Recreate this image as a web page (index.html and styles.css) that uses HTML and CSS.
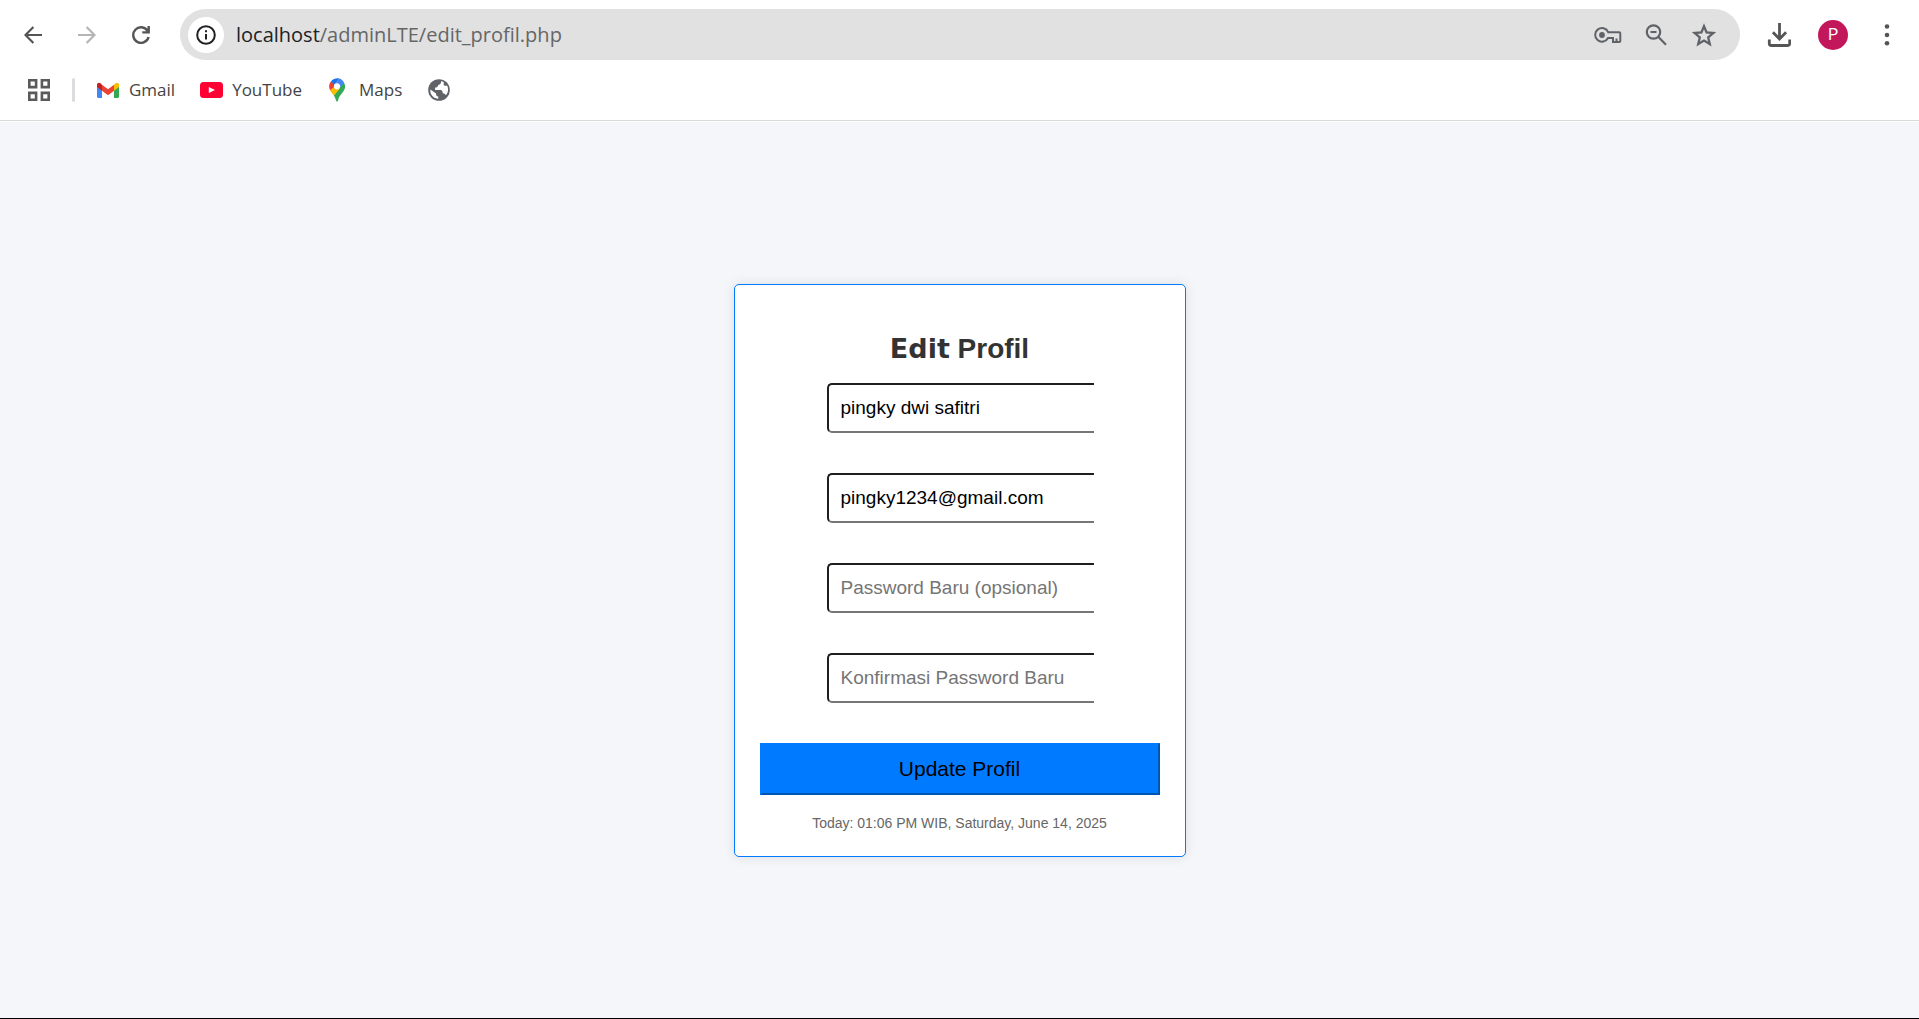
FILE: index.html
```html
<!DOCTYPE html>
<html lang="id">
<head>
<meta charset="utf-8">
<meta name="viewport" content="width=device-width, initial-scale=1">
<title>Edit Profil</title>
<link rel="stylesheet" href="styles.css">
</head>
<body>
<header class="browser">
  <div class="toolbar">
    <nav class="nav-buttons" aria-label="Navigation">
      <button class="icon-button" type="button" aria-label="Back">
        <svg width="18" height="18" viewBox="0 0 18 18" fill="none" stroke="#555" stroke-width="2.2"><path d="M18 9H1.8M9.4 1 1.5 9l7.9 8"/></svg>
      </button>
      <button class="icon-button" type="button" aria-label="Forward" disabled>
        <svg width="18" height="18" viewBox="0 0 18 18" fill="none" stroke="#b5b5b5" stroke-width="2.2"><path d="M0 9h16.2M8.6 1l7.9 8-7.9 8"/></svg>
      </button>
      <button class="icon-button" type="button" aria-label="Reload">
        <svg width="18" height="18" viewBox="0 0 18 18" fill="none" stroke="#555" stroke-width="2.4"><path d="M15.6 4.8A7.8 7.8 0 1 0 16.6 11M16.7 0v6.4h-6.4"/></svg>
      </button>
    </nav>
    <div class="address-bar">
      <button class="site-info" type="button" aria-label="Site information">
        <svg width="20" height="20" viewBox="0 0 20 20"><circle cx="10" cy="10" r="8.8" fill="none" stroke="#202124" stroke-width="2"/><path d="M9 9h2v5.5H9zM9 5.3h2v2H9z" fill="#202124"/></svg>
      </button>
      <span class="url"><span class="host">localhost</span>/adminLTE/edit_profil.php</span>
      <div class="address-actions">
        <button class="icon-button" type="button" aria-label="Passwords">
          <svg width="28" height="18" viewBox="0 0 28 18" fill="none" stroke="#5f6368" stroke-width="2"><path d="M14.2 6.2A6.8 6.8 0 1 0 14 12h5v4h6.2q1.1 0 1.1-1.100V7.300q0-1.100-1.100-1.100zM22.500 16v-3.500"/><circle cx="8" cy="9" r="2.900" fill="#5f6368" stroke="none"/></svg>
        </button>
        <button class="icon-button" type="button" aria-label="Zoom">
          <svg width="22" height="22" viewBox="0 0 22 22" fill="none" stroke="#5f6368" stroke-width="2.200"><circle cx="8.500" cy="8" r="6.700"/><path d="M13.200 12.800 21 20.700M5.500 8h6"/></svg>
        </button>
        <button class="icon-button" type="button" aria-label="Bookmark this tab">
          <svg width="24" height="24" viewBox="0 0 24 24" fill="none" stroke="#5f6368" stroke-width="2.300"><path d="M12 3.200 14.600 9.400l6.800.600-5.200 4.400 1.600 6.600L12 17.500 6.200 21l1.600-6.600L2.600 10l6.800-.6z"/></svg>
        </button>
      </div>
    </div>
    <div class="nav-buttons">
      <button class="icon-button" type="button" aria-label="Downloads">
        <svg width="24" height="24" viewBox="-1 0 24 24" fill="none" stroke="#555" stroke-width="2.800"><path d="M11.500 0v16M4.900 9.300l6.600 6.700 6.600-6.700M1.300 16.500v4q0 2 2 2h16.400q2 0 2-2v-4"/></svg>
      </button>
      <button class="icon-button" type="button" aria-label="Profile"><span class="avatar">P</span></button>
      <button class="icon-button" type="button" aria-label="Menu">
        <svg width="6" height="24" viewBox="0 0 6 24" fill="#555"><circle cx="3" cy="3.500" r="2.300"/><circle cx="3" cy="12" r="2.300"/><circle cx="3" cy="20.300" r="2.300"/></svg>
      </button>
    </div>
  </div>
  <nav class="bookmarks" aria-label="Bookmarks">
    <button class="apps" type="button" aria-label="Apps">
      <svg width="22" height="22" viewBox="0 0 22 22" fill="none" stroke="#5a5a5a" stroke-width="2.600"><path d="M1.300 1.300h6.800v6.800H1.300zM13.900 1.300h6.800v6.800h-6.800zM1.300 13.900h6.800v6.800H1.300zM13.900 13.900h6.800v6.800h-6.800z"/></svg>
    </button>
    <span class="divider"></span>
    <div class="bookmark-list">
      <a class="bookmark" href="#">
        <svg width="24" height="24" viewBox="1 0 24 24"><path d="M1 6v12.500Q1 20 2.500 20H6V9.500z" fill="#4285f4"/><path d="M23 6v12.500q0 1.500-1.500 1.500H18V9.500z" fill="#34a853"/><path d="M6 6.800 12 11.300l6-4.500v6L12 17.300 6 12.800z" fill="#ea4335"/><path d="M18 6.800 19.400 5.200C21 4 23 4.800 23 7v2L18 12.800z" fill="#fbbc04"/><path d="M6 6.800 4.600 5.200C3 4 1 4.800 1 7v2L6 12.800z" fill="#c5221f"/></svg>
        Gmail</a>
      <a class="bookmark" href="#">
        <svg width="24" height="24" viewBox="0 0 24 24"><rect y="4" width="23" height="16" rx="3.500" fill="#ff0033"/><path d="m8.800 9 6.200 3-6.200 3z" fill="#fff"/></svg>
        YouTube</a>
      <a class="bookmark" href="#">
        <svg width="24" height="24" viewBox="2 0 24 24"><path d="M18.700 4.300C22 9.500 18.800 13 16 16.500c-1.700 2-2.400 3.500-3 6-.3 1.300-1.700 1.300-2 0-.5-2-1-3.300-2.200-5z" fill="#34a853"/><path d="M5 12.300 9.500 7l5.300 3.800-6 6.700C7.300 15.600 5.800 14 5 12.300z" fill="#fbbc04"/><path d="M6 3.300 11 7.500l-6 4.800C3.500 9 4 6 6 3.300z" fill="#ea4335"/><path d="M14.300.4 9.500 6.900 6 3.300C8 .8 11 0 14.300.4z" fill="#1a73e8"/><path d="M14.300.4c2 .6 3.600 2 4.700 4.400l-5.500 6.400-4-4.300z" fill="#4285f4"/><circle cx="12" cy="8.300" r="3.100" fill="#fff"/></svg>
        Maps</a>
      <a class="bookmark" href="#" aria-label="Website">
        <svg width="24" height="24" viewBox="0 0 24 24"><circle cx="12" cy="12" r="10.800" fill="#5f6368"/><path d="M14 3.300c.3 2-.7 3.600-2.700 3.700-.6 2.200-1.700 2.700-3.200 2.600V12h5.400c1.800.1 2.200 1.300 2.200 3.200 1.700-.1 2.600.8 3 2.100 2.900-3.100 2.900-7.100 1.300-9.900-1.600.7-3.300.5-3.300-1.200V4c-.7-.4-1.500-.6-2.700-.7zM3.300 11.500c-.5 5.200 3.500 9.300 8 9.300v-2.400c-1.700 0-2.200-1.100-2.200-3z" fill="#fff"/></svg>
      </a>
    </div>
  </nav>
</header>
<main class="page">
  <form class="card" onsubmit="return false">
    <h2 class="title"><span class="title-heavy">Edit</span> Profil</h2>
    <div class="fields">
      <input class="field" type="text" name="nama" aria-label="Nama" value="pingky dwi safitri">
      <input class="field" type="email" name="email" aria-label="Email" value="pingky1234@gmail.com">
      <input class="field" type="password" name="password" aria-label="Password Baru" placeholder="Password Baru (opsional)">
      <input class="field" type="password" name="konfirmasi" aria-label="Konfirmasi Password Baru" placeholder="Konfirmasi Password Baru">
    </div>
    <button class="submit" type="submit">Update Profil</button>
    <p class="today">Today: 01:06 PM WIB, Saturday, June 14, 2025</p>
  </form>
</main>
</body>
</html>
```
FILE: styles.css
```css
* {
  box-sizing: border-box;
}

body {
  margin: 0;
  min-height: 100vh;
  display: flex;
  flex-direction: column;
  background: #f4f6fa;
  border-bottom: 1px solid #000;
  font-family: "Liberation Sans", Arial, sans-serif;
}

svg {
  display: block;
}

button {
  padding: 0;
  border: 0;
  background: none;
}

.browser {
  background: #fff;
  border-bottom: 1px solid #d9d9d9;
  font-family: "Open Sans", "Noto Sans", sans-serif;
}

.toolbar {
  display: flex;
  align-items: center;
  gap: 21px;
  padding: 9px 14px 0 15px;
}

.nav-buttons {
  display: flex;
  gap: 18px;
}

.icon-button {
  width: 36px;
  height: 36px;
  display: flex;
  align-items: center;
  justify-content: center;
}

.address-bar {
  flex: 1;
  display: flex;
  align-items: center;
  gap: 12px;
  height: 51px;
  padding: 0 18px 0 8px;
  border-radius: 26px;
  background: #e1e1e1;
}

.site-info {
  width: 36px;
  height: 36px;
  display: flex;
  align-items: center;
  justify-content: center;
  border-radius: 50%;
  background: #fff;
}

.url {
  flex: 1;
  font-size: 20px;
  line-height: 28px;
  color: #666;
}

.host {
  color: #202124;
}

.address-actions {
  display: flex;
  gap: 12px;
}

.avatar {
  width: 30px;
  height: 30px;
  border-radius: 50%;
  background: #c2185b;
  color: #fff;
  font: 16px/30px Roboto, sans-serif;
  text-align: center;
}

.bookmarks {
  display: flex;
  align-items: center;
  gap: 22px;
  height: 60px;
  padding: 0 28px;
}

.divider {
  width: 3px;
  height: 24px;
  border-radius: 2px;
  background: #dadce0;
}

.bookmark-list {
  display: flex;
  gap: 25px;
}

.bookmark {
  display: flex;
  align-items: center;
  gap: 8px;
  font-size: 17px;
  line-height: 24px;
  color: #444;
  text-decoration: none;
}

.page {
  flex: 1;
  display: flex;
  align-items: center;
  justify-content: center;
  padding-top: 1px;
  border-top: 1px solid #fff;
}

.card {
  width: 452px;
  padding: 48px 25px 25px;
  border: 1px solid #007bff;
  border-radius: 5px;
  background: #fff;
  box-shadow: 0 0 12px rgba(0, 0, 0, 0.1);
}

.title {
  margin: 0 0 18px;
  font-size: 28px;
  line-height: 32px;
  text-align: center;
  color: #333;
}

.title-heavy {
  font-family: "DejaVu Sans", sans-serif;
  font-size: 27px;
  line-height: 1;
}

.fields {
  display: flex;
  flex-direction: column;
  gap: 40px;
  margin: 0 66px 40px 67px;
}

.field {
  width: 100%;
  height: 50px;
  padding: 0 12px;
  border: 2px solid #767676;
  border-top-color: #1f1f1f;
  border-left-color: #1f1f1f;
  border-right: 0;
  border-radius: 5px 0 0 5px;
  background: #fff;
  color: #000;
  font: 19px "Liberation Sans", Arial, sans-serif;
}

.field::placeholder {
  color: #757575;
}

.submit {
  display: block;
  width: 100%;
  height: 52px;
  border: 2px solid #007bff;
  border-right-color: #0056b3;
  border-bottom-color: #0056b3;
  background: #007bff;
  color: #000;
  font: 21px "Liberation Sans", Arial, sans-serif;
}

.today {
  margin: 20px 0 0;
  font-size: 14px;
  line-height: 16px;
  text-align: center;
  color: #666;
}
```
